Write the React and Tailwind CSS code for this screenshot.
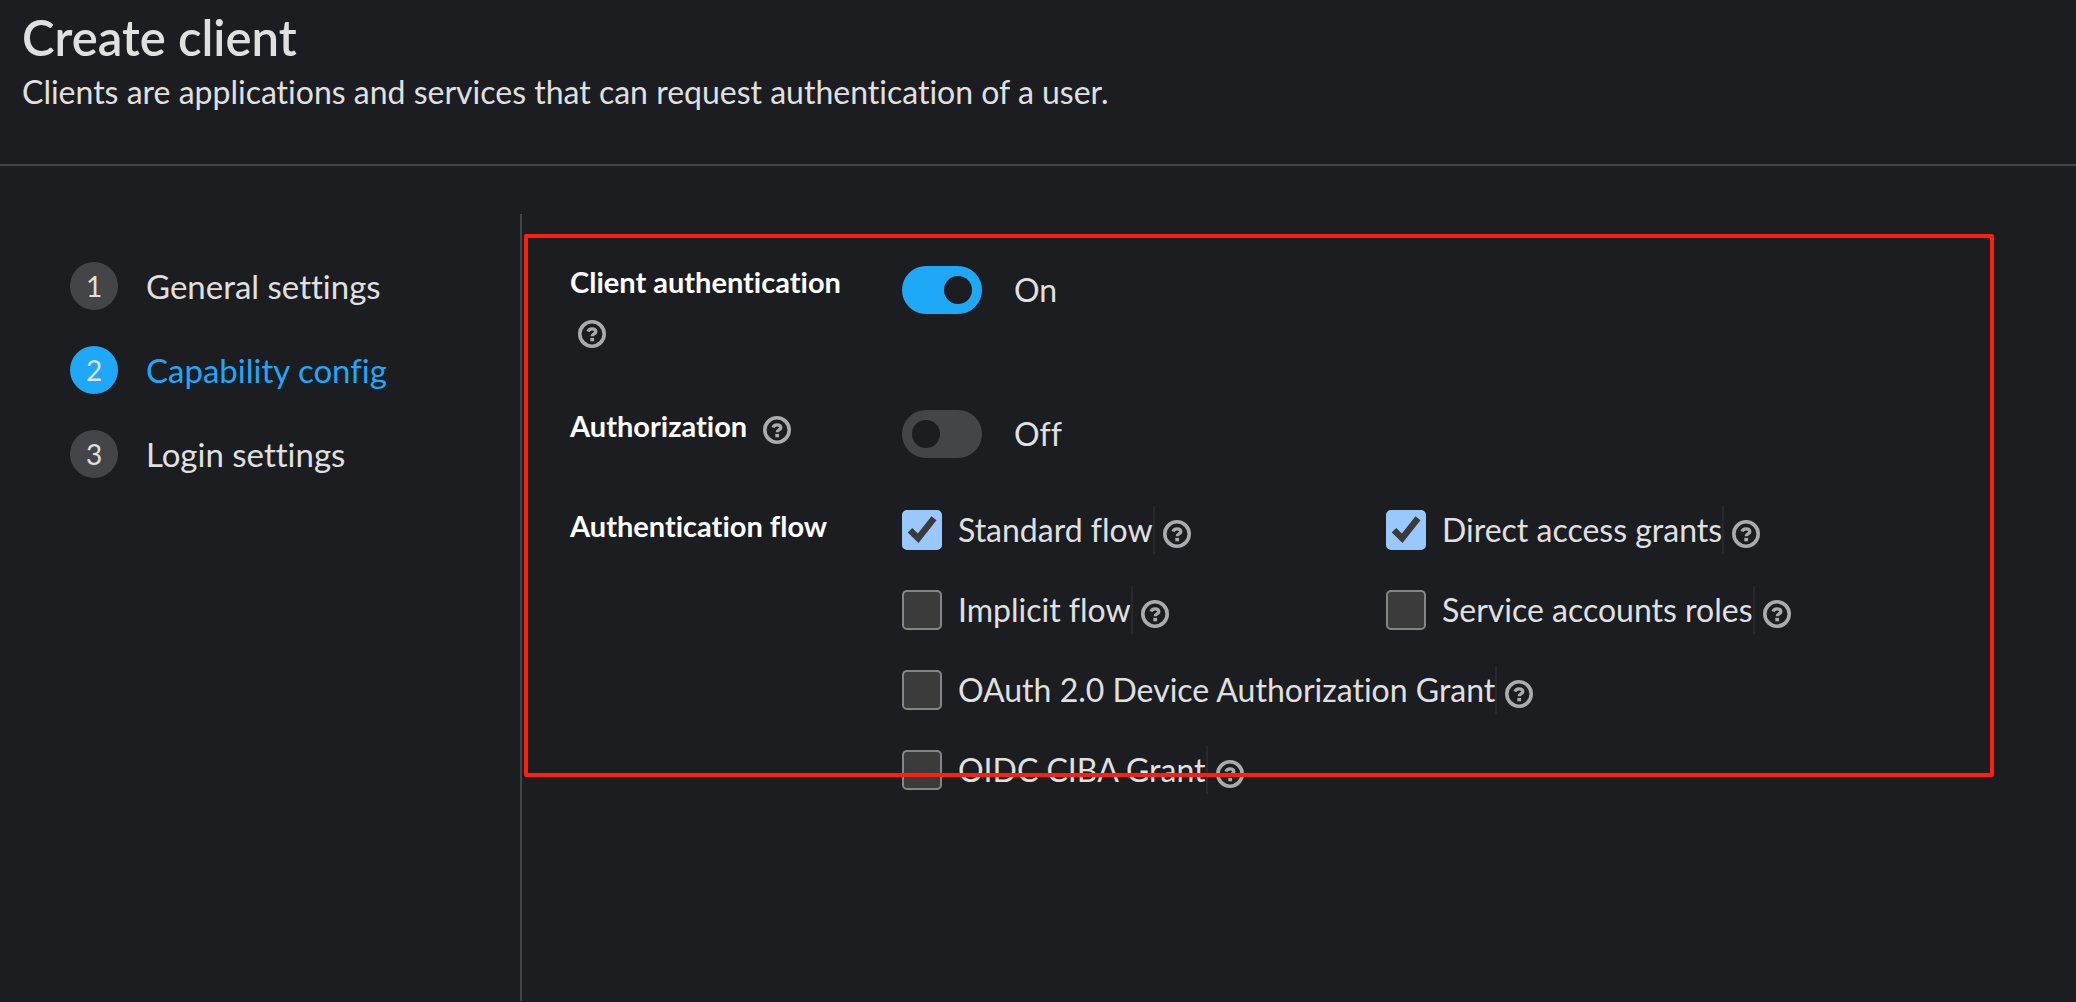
const steps = [
  { id: 1, name: "General settings" },
  { id: 2, name: "Capability config", current: true },
  { id: 3, name: "Login settings" },
];

const flows = [
  { id: "standard", label: "Standard flow", checked: true },
  { id: "direct", label: "Direct access grants", checked: true },
  { id: "implicit", label: "Implicit flow" },
  { id: "service", label: "Service accounts roles" },
  { id: "device", label: "OAuth 2.0 Device Authorization Grant", wide: true },
  { id: "ciba", label: "OIDC CIBA Grant", wide: true },
];

const HelpButton = ({ topic }) => (
  <button
    type="button"
    aria-label={`More help for ${topic}`}
    className="flex h-12 shrink-0 items-center px-2 pt-2 text-[#aaabac]"
  >
    <svg viewBox="0 0 28 28" className="size-7" fill="none" stroke="currentColor" aria-hidden="true">
      <circle cx="14" cy="14" r="12.2" strokeWidth="3.6" />
      <path d="M10 11.6C10.6 9.7 12 8.8 14 8.8c2.2 0 3.8 1.1 3.8 2.9 0 2.3-3.6 2.2-3.6 4.5" strokeWidth="3.3" />
      <path d="M12.3 17.9h3.8v3.4h-3.8z" fill="currentColor" stroke="none" />
    </svg>
  </button>
);

const FormRow = ({ label, htmlFor, help, children }) => (
  <div className="grid grid-cols-[332px_1fr]">
    <div className="flex flex-wrap content-start items-center gap-x-2 pr-8 pb-1">
      {htmlFor ? (
        <label htmlFor={htmlFor} className="text-[29px] leading-12 font-bold text-white">
          {label}
        </label>
      ) : (
        <span className="text-[29px] leading-12 font-bold text-white">{label}</span>
      )}
      {help && <HelpButton topic={label} />}
    </div>
    {children}
  </div>
);

const Switch = ({ id, on }) => (
  <div className="flex items-center gap-8 self-start pt-2">
    <input
      id={id}
      type="checkbox"
      role="switch"
      defaultChecked={on}
      className="flex h-12 w-20 shrink-0 appearance-none items-center rounded-full bg-[#444548] px-2.5 before:size-7 before:rounded-full before:bg-[#1b1d21] checked:justify-end checked:bg-[#1fa7f8]"
    />
    <label htmlFor={id} className="text-[32px] leading-12">
      {on ? "On" : "Off"}
    </label>
  </div>
);

const FlowCheckbox = ({ id, label, checked, wide }) => (
  <div className={wide ? "col-span-2 flex items-center" : "flex items-center"}>
    <div className="relative mr-4 size-10 shrink-0">
      <input
        id={id}
        type="checkbox"
        defaultChecked={checked}
        className="peer block size-10 appearance-none rounded-[5px] border-2 border-[#858585] bg-[#3b3b3b] checked:border-[#99c8ff] checked:bg-[#99c8ff]"
      />
      <svg
        viewBox="0 0 40 40"
        className="pointer-events-none absolute inset-0 hidden size-10 peer-checked:block"
        fill="none"
        stroke="#3b3b3b"
        strokeWidth="6.4"
        aria-hidden="true"
      >
        <path d="M8 20.2l8.2 8L32 8.2" />
      </svg>
    </div>
    <label htmlFor={id} className="border-r-2 border-[#26282b] text-[32px] leading-12 whitespace-nowrap">
      {label}
    </label>
    <HelpButton topic={label} />
  </div>
);

export default function App() {
  return (
    <div className="flex min-h-screen flex-col bg-[#1b1d21] pb-px font-['Lato',sans-serif] text-[#e0e0e0] [font-variant-ligatures:none]">
      <header className="border-b-2 border-[#444548] px-[22px] pt-1.5 pb-12">
        <h1 className="text-[49px] leading-[62px] font-semibold">Create client</h1>
        <p className="text-[32px] leading-12">
          Clients are applications and services that can request authentication of a user.
        </p>
      </header>

      <div className="flex flex-1 pt-12">
        <nav aria-label="Wizard steps" className="w-[522px] shrink-0 border-r-2 border-[#444548] pt-12 pl-[70px]">
          <ol className="flex flex-col gap-9">
            {steps.map((step) => (
              <li key={step.id}>
                <button
                  type="button"
                  aria-current={step.current ? "step" : undefined}
                  className={
                    step.current
                      ? "flex items-center gap-7 text-[33px] leading-12 text-[#1fa7f8]"
                      : "flex items-center gap-7 text-[33px] leading-12"
                  }
                >
                  <span
                    className={
                      step.current
                        ? "size-12 rounded-full bg-[#1fa7f8] text-center text-[28px] text-[#e0e0e0]"
                        : "size-12 rounded-full bg-[#444548] text-center text-[28px]"
                    }
                  >
                    {step.id}
                  </span>
                  {step.name}
                </button>
              </li>
            ))}
          </ol>
        </nav>

        <main className="relative flex-1 pt-11 pl-12">
          <form className="flex flex-col gap-11">
            <FormRow label="Client authentication" htmlFor="client-auth" help>
              <Switch id="client-auth" on />
            </FormRow>
            <FormRow label="Authorization" htmlFor="authorization" help>
              <Switch id="authorization" />
            </FormRow>
            <FormRow label="Authentication flow">
              <div className="grid grid-cols-[484px_1fr] gap-y-8 pt-1">
                {flows.map((flow) => (
                  <FlowCheckbox key={flow.id} {...flow} />
                ))}
              </div>
            </FormRow>
          </form>
          {/* highlight frame drawn over the form */}
          <div className="pointer-events-none absolute top-5 right-[82px] left-0.5 h-[543px] rounded-xs border-4 border-[#ff1e10]" />
        </main>
      </div>
    </div>
  );
}
